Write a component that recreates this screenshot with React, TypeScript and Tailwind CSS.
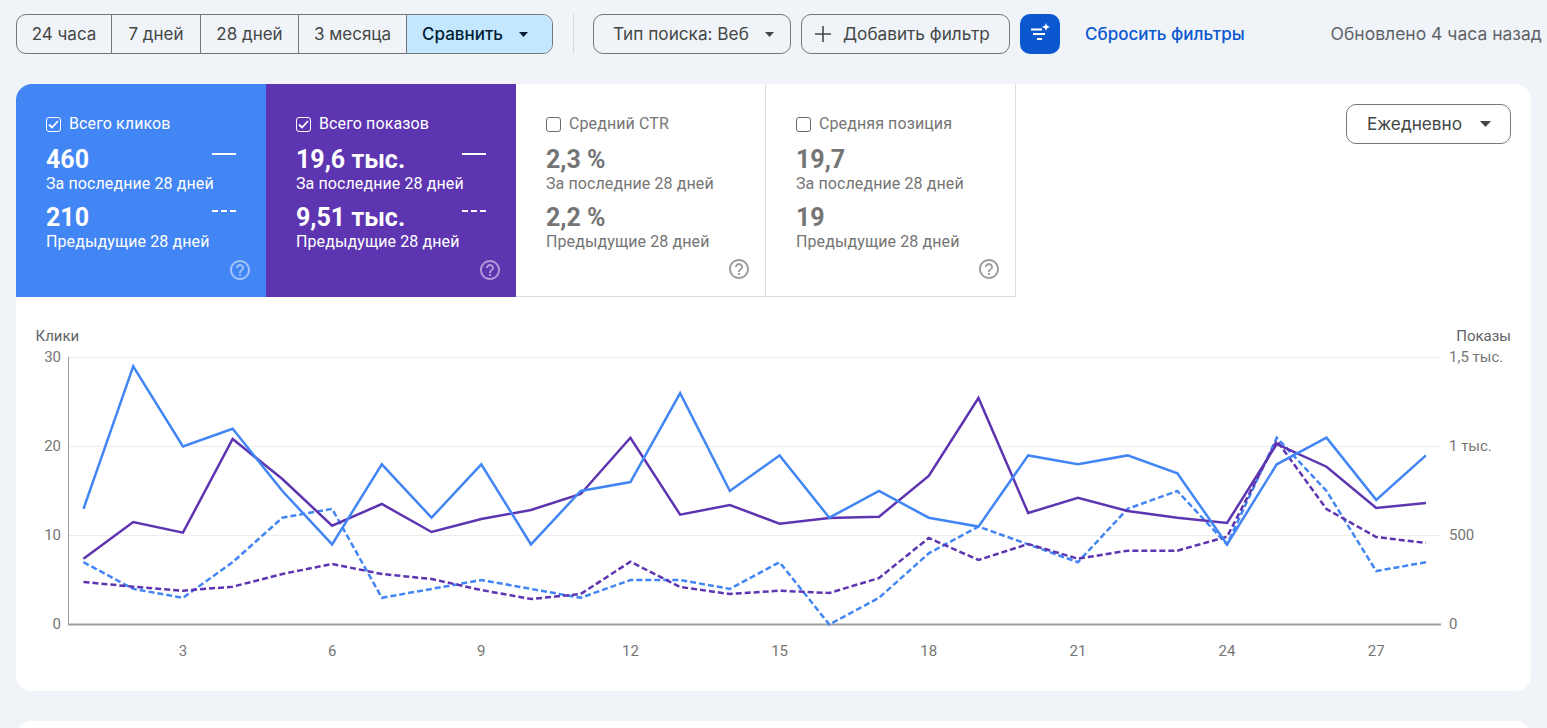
const FONT_UI = "font-['Inter','Liberation_Sans',sans-serif]";

const blueSolid = [13, 29, 20, 22, 15, 9, 18, 12, 18, 9, 15, 16, 26, 15, 19, 12, 15, 12, 11, 19, 18, 19, 17, 9, 18, 21, 14, 19];
const blueDashed = [7, 4, 3, 7, 12, 13, 3, 4, 5, 4, 3, 5, 5, 4, 7, 0, 3, 8, 11, 9, 7, 13, 15, 9, 21, 15, 6, 7];
// purple series are in page pixels, read off the picture
const purpleSolid = [558.7, 522, 532.7, 439, 479, 525.7, 504, 532, 519, 510, 494, 437.7, 514.7, 505, 523.7, 518, 516.7, 476, 398, 513, 497.7, 511, 517.7, 523, 444, 466.7, 508, 503];
const purpleDashed = [582, 586.7, 590.7, 586.7, 574, 564, 574, 579, 590, 599, 594, 561.7, 587, 594, 590.7, 593, 578, 538, 560, 544, 558.7, 550.7, 550.7, 536.7, 440.7, 509, 537, 543];

const dayX = (i: number) => 83.5 + i * 49.72;
const valueY = (v: number) => 624.5 - v * 8.9;
const toPoints = (ys: number[]) => ys.map((y, i) => `${dayX(i)},${y}`).join(" ");

const tiles = [
  { label: "Всего кликов", now: "460", prev: "210", on: true, bg: "bg-[#4285f4]" },
  { label: "Всего показов", now: "19,6 тыс.", prev: "9,51 тыс.", on: true, bg: "bg-[#5e35b1]" },
  { label: "Средний CTR", now: "2,3 %", prev: "2,2 %", on: false, bg: "bg-white" },
  { label: "Средняя позиция", now: "19,7", prev: "19", on: false, bg: "bg-white" },
];

function Caret({ className = "h-[5px] w-[9px]" }: { className?: string }) {
  return (
    <svg viewBox="0 0 10 5" preserveAspectRatio="none" className={`shrink-0 ${className}`}>
      <path d="M0 0h10L5 5z" fill="currentColor" />
    </svg>
  );
}

function HelpIcon({ className }: { className?: string }) {
  return (
    <svg width="24" height="24" viewBox="0 0 24 24" className={className}>
      <path
        fill="currentColor"
        d="M11 18h2v-2h-2v2zm1-16C6.48 2 2 6.48 2 12s4.48 10 10 10 10-4.48 10-10S17.52 2 12 2zm0 18c-4.41 0-8-3.59-8-8s3.59-8 8-8 8 3.59 8 8-3.59 8-8 8zm0-14c-2.21 0-4 1.79-4 4h2c0-1.1.9-2 2-2s2 .9 2 2c0 2-3 1.75-3 5h2c0-2.25 3-2.5 3-5 0-2.21-1.79-4-4-4z"
      />
    </svg>
  );
}

function Tile({ tile }: { tile: (typeof tiles)[number] }) {
  const { on } = tile;
  return (
    <div
      className={`flex h-[213px] w-[250px] flex-col pl-[30px] pr-[14px] pt-[30px] pb-[15px] font-['Roboto',sans-serif] ${tile.bg} ${
        on ? "text-white" : "border-b border-r border-[#dadce0] text-[#757575]"
      }`}
    >
      <div className="flex h-5 items-center gap-2 text-base tracking-[0.1px]">
        <span
          className={`flex h-[15px] w-[15px] items-center justify-center rounded-[3px] border ${
            on ? "border-white" : "border-[#6b6b6b]"
          }`}
        >
          {on && (
            <svg width="11" height="9" viewBox="0 0 11 9">
              <path d="M1 4.5 4 7.5 10 1" fill="none" stroke="white" strokeWidth="1.8" />
            </svg>
          )}
        </span>
        {tile.label}
      </div>
      <div className="mt-3 flex h-7 items-start justify-between pr-4">
        <span className="text-[25px] font-bold leading-7">{tile.now}</span>
        {on && <span className="mt-[7px] h-0.5 w-6 bg-white" />}
      </div>
      <div className="h-5 text-base leading-5 tracking-[0.1px]">За последние 28 дней</div>
      <div className="mt-[10px] flex h-7 items-start justify-between pr-4">
        <span className="text-[25px] font-bold leading-7">{tile.prev}</span>
        {on && (
          <span className="mt-1.5 flex w-6 gap-[3px]">
            <span className="h-0.5 w-[6px] bg-white" />
            <span className="h-0.5 w-[6px] bg-white" />
            <span className="h-0.5 w-[6px] bg-white" />
          </span>
        )}
      </div>
      <div className="h-5 text-base leading-5 tracking-[0.1px]">Предыдущие 28 дней</div>
      <HelpIcon className={`mt-auto self-end ${on ? "text-white/50" : "text-[#9e9e9e]"}`} />
    </div>
  );
}

function Chart() {
  const tickClass = "fill-[#757575] text-[15px]";
  return (
    <svg viewBox="16 297 1515 394" className="block h-[394px] w-[1515px] font-['Roboto',sans-serif]">
      {[357.5, 446.5, 535.5].map((y) => (
        <line key={y} x1="68" x2="1441" y1={y} y2={y} stroke="#ececec" strokeWidth="1" />
      ))}
      <line x1="68.5" x2="68.5" y1="357" y2="625" stroke="#9e9e9e" strokeWidth="1" />
      <line x1="68" x2="1441" y1="624.5" y2="624.5" stroke="#9e9e9e" strokeWidth="2" />

      <text x="35.5" y="341" className="fill-[#5f6368] text-[15px]">Клики</text>
      <text x="1511" y="341" textAnchor="end" className="fill-[#5f6368] text-[15px]">Показы</text>

      {[
        ["30", 357.5],
        ["20", 446.5],
        ["10", 535.5],
        ["0", 624.5],
      ].map(([t, y]) => (
        <text key={t} x="61" y={Number(y) + 4.5} textAnchor="end" className={tickClass}>{t}</text>
      ))}
      {[
        ["1,5 тыс.", 357.5],
        ["1 тыс.", 446.5],
        ["500", 535.5],
        ["0", 624.5],
      ].map(([t, y]) => (
        <text key={t} x="1449" y={Number(y) + 4.5} className={tickClass}>{t}</text>
      ))}
      {[3, 6, 9, 12, 15, 18, 21, 24, 27].map((d) => (
        <text key={d} x={dayX(d - 1)} y="656" textAnchor="middle" className={tickClass}>{d}</text>
      ))}

      <polyline points={toPoints(blueDashed.map(valueY))} fill="none" stroke="#4285f4" strokeWidth="2.5" strokeDasharray="6 3" />
      <polyline points={toPoints(purpleDashed)} fill="none" stroke="#5e35b1" strokeWidth="2.5" strokeDasharray="6 3" />
      <polyline points={toPoints(purpleSolid)} fill="none" stroke="#5e35b1" strokeWidth="2.5" />
      <polyline points={toPoints(blueSolid.map(valueY))} fill="none" stroke="#4285f4" strokeWidth="2.5" />
    </svg>
  );
}

export default function App() {
  const segments = [
    { label: "24 часа", w: "w-[95px]" },
    { label: "7 дней", w: "w-[89px]" },
    { label: "28 дней", w: "w-[98px]" },
    { label: "3 месяца", w: "w-[108px]" },
  ];
  return (
    <div className={`h-[728px] w-[1547px] overflow-hidden bg-[#f0f4f9] ${FONT_UI}`}>
      <div className="flex h-[84px] items-start whitespace-nowrap pl-4 pt-[14px] text-[17px] leading-6">
        <div className="flex h-10 w-[537px] overflow-hidden rounded-[10px] border border-[#747775] text-[#444746]">
          {segments.map((s) => (
            <div key={s.label} className={`flex items-center justify-center border-r border-[#747775] ${s.w}`}>
              {s.label}
            </div>
          ))}
          <div className="flex flex-1 items-center gap-[16px] bg-[#c2e7ff] pl-[15px] font-medium text-[#001d35]">
            Сравнить
            <Caret />
          </div>
        </div>
        <div className="ml-5 h-10 w-px bg-[#d5d8dc]" />
        <div className="ml-[19px] flex h-10 w-[198px] items-center gap-[16px] rounded-[10px] border border-[#747775] pl-[19px] text-[17.2px] text-[#444746]">
          Тип поиска: Веб
          <Caret />
        </div>
        <div className="ml-[10px] flex h-10 w-[209px] items-center gap-[11px] rounded-[10px] border border-[#747775] pl-[12px] text-[17.2px] text-[#444746]">
          <svg width="18" height="18" viewBox="0 0 18 18" className="shrink-0">
            <path d="M9 1v16M1 9h16" stroke="currentColor" strokeWidth="1.6" fill="none" />
          </svg>
          Добавить фильтр
        </div>
        <div className="ml-[10px] flex h-10 w-10 items-center justify-center rounded-[10px] bg-[#0b57d0]">
          <svg width="22" height="22" viewBox="0 0 22 22">
            <path d="M2 6.5h11M4 11h12M8 16h5" stroke="white" strokeWidth="1.8" fill="none" />
            <path d="M17 -.5c.4 3 1.5 4.1 4.5 4.5-3 .4-4.1 1.5-4.5 4.5-.4-3-1.5-4.1-4.5-4.5 3-.4 4.1-1.5 4.5-4.5z" fill="white" />
          </svg>
        </div>
        <div className="ml-[25px] flex h-10 items-center font-medium text-[#0b57d0]">Сбросить фильтры</div>
        <div className="ml-[86px] flex h-10 items-center text-[17.5px] text-[#5f6368]">Обновлено 4 часа назад</div>
      </div>

      <div className="mx-4 h-[607px] w-[1515px] rounded-2xl bg-white">
        <div className="flex items-start">
          <div className="flex overflow-hidden rounded-tl-2xl">
            {tiles.map((t) => (
              <Tile key={t.label} tile={t} />
            ))}
          </div>
          <div className="ml-auto mr-5 mt-5 flex h-10 w-[165px] items-center gap-[18px] rounded-[10px] border border-[#747775] pl-5 text-[17.2px] text-[#444746]">
            Ежедневно
            <Caret className="h-[6px] w-[11px]" />
          </div>
        </div>
        <Chart />
      </div>

      <div className="mx-4 mt-[30px] h-10 w-[1515px] rounded-t-2xl bg-white" />
    </div>
  );
}
